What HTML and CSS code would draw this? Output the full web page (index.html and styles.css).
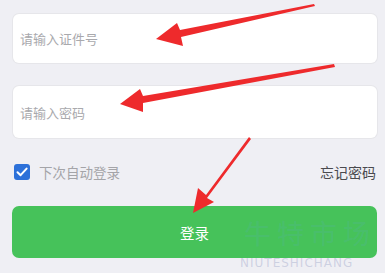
FILE: index.html
```html
<!DOCTYPE html>
<html lang="zh">
<head>
<meta charset="utf-8">
<link rel="stylesheet" href="styles.css">
</head>
<body>
<div class="page">
  <div class="field"><span class="ph">请输入证件号</span></div>
  <div class="field second"><span class="ph">请输入密码</span></div>
  <div class="opts">
    <label class="remember">
      <span class="box"><svg viewBox="0 0 16 16" width="16" height="16"><path d="M3.5 8.2 L6.6 11.2 L12.6 4.6" fill="none" stroke="#fff" stroke-width="2" stroke-linecap="round" stroke-linejoin="round"/></svg></span>
      <span class="lbl">下次自动登录</span>
    </label>
    <span class="forgot">忘记密码</span>
  </div>
  <div class="btn">登录</div>
  <div class="wm-big">牛特市场</div>
  <div class="wm">NIUTESHICHANG</div>
</div>
<svg class="arrows" viewBox="0 0 385 273" width="385" height="273">
  <g fill="#ee2a2c">
    <path d="M314 4 L180 30 L177 23 L156 39 L183 46 L181 37 L315 6 Z"/>
    <path d="M334 64 L143 96 L140 89 L120 104 L143 112 L143 103 L335 67 Z"/>
    <path d="M249 137 L206 195 L198 188 L193 213 L214 202 L207 198 L251 139 Z"/>
  </g>
</svg>
</body>
</html>
```
FILE: styles.css
```css
html, body {
  margin: 0;
  padding: 0;
}
body {
  width: 385px;
  height: 273px;
  overflow: hidden;
  background: #efeff4;
  font-family: "Noto Sans CJK SC", "Noto Sans", sans-serif;
  position: relative;
}
.page {
  padding: 14px 8px 0 12px;
  position: relative;
  height: 259px;
}
.field {
  margin-left: 1px;
  height: 49px;
  background: #fff;
  border-radius: 6px;
  display: flex;
  align-items: center;
  padding-left: 7px;
  box-shadow: 0 0 0 1px #e6e6ea;
}
.field.second {
  margin-top: 23px;
  height: 52px;
}
.ph {
  font-size: 13px;
  color: #a9a9ad;
}
.opts {
  display: flex;
  justify-content: space-between;
  align-items: center;
  margin-top: 24px;
  padding-left: 2px;
  padding-right: 1px;
}
.remember {
  display: flex;
  align-items: center;
  gap: 9px;
}
.box {
  width: 16px;
  height: 16px;
  background: #2d71d9;
  border-radius: 3px;
  display: flex;
}
.lbl {
  font-size: 13.5px;
  color: #a4a4a8;
}
.forgot {
  font-size: 14px;
  color: #4a4a4e;
}
.btn {
  margin-top: 24px;
  height: 52px;
  background: #46c25a;
  border-radius: 7px;
  color: #fff;
  font-size: 14.5px;
  display: flex;
  align-items: center;
  justify-content: center;
}
.wm-big {
  position: absolute;
  left: 244px;
  top: 213px;
  font-size: 27px;
  letter-spacing: 6px;
  color: rgba(90, 170, 200, 0.18);
}
.wm {
  position: absolute;
  left: 240px;
  top: 256px;
  font-family: "DejaVu Sans", sans-serif;
  font-size: 12px;
  letter-spacing: 1px;
  color: rgba(140, 150, 190, 0.35);
}
.arrows {
  position: absolute;
  left: 0;
  top: 0;
  pointer-events: none;
}
```
